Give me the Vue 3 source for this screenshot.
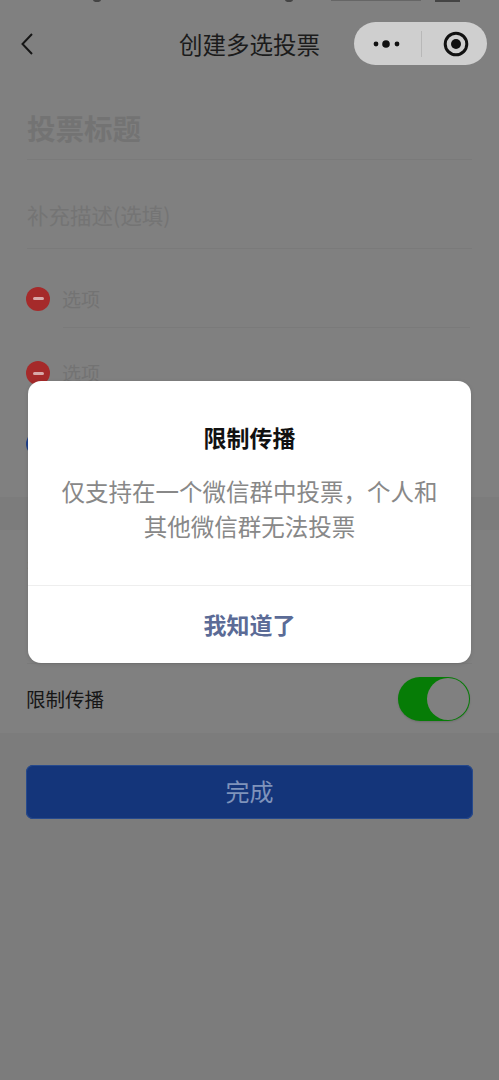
<script setup>
const options = [{ id: 1 }, { id: 2 }]
</script>

<template>
  <div class="page">
    <div class="status">
      <span class="st-dot st-a"></span>
      <span class="st-dot st-b"></span>
      <span class="st-bits"></span>
      <span class="st-batt"></span>
    </div>
    <header class="nav">
      <svg class="back" width="14" height="24" viewBox="0 0 14 24">
        <path d="M12 2 L2.5 12 L12 22" fill="none" stroke="#161616" stroke-width="2" />
      </svg>
      <div class="nav-title">创建多选投票</div>
      <div class="capsule">
        <svg class="dots" width="30" height="10" viewBox="0 0 30 10">
          <circle cx="4" cy="5" r="2.4" fill="#111" />
          <circle cx="14" cy="5" r="3.8" fill="#111" />
          <circle cx="25" cy="5" r="2.4" fill="#111" />
        </svg>
        <span class="cap-sep"></span>
        <svg class="target" width="26" height="26" viewBox="0 0 26 26">
          <circle cx="13" cy="13" r="10.8" fill="none" stroke="#111" stroke-width="3" />
          <circle cx="13" cy="13" r="5" fill="#111" />
        </svg>
      </div>
    </header>

    <section class="form">
      <div class="vote-title">投票标题</div>
      <div class="vote-desc">补充描述(选填)</div>
      <div v-for="o in options" :key="o.id" class="option">
        <span class="minus"><i></i></span>
        <span class="opt-text">选项</span>
      </div>
      <div class="add-row"><span class="plus"></span></div>
    </section>

    <section class="settings">
      <div class="set-row set-top"><span class="set-mark">截止时间</span></div>
      <div class="set-row set-limit">
        <span class="set-label">限制传播</span>
        <span class="switch"><i></i></span>
      </div>
    </section>

    <div class="btn-wrap">
      <div class="done">完成</div>
    </div>

    <div class="modal">
      <div class="m-body">
        <div class="m-title">限制传播</div>
        <div class="m-text">仅支持在一个微信群中投票，个人和<br />其他微信群无法投票</div>
      </div>
      <div class="m-action">我知道了</div>
    </div>
  </div>
</template>

<style scoped>
.page {
  position: relative;
  width: 499px;
  height: 1080px;
  overflow: hidden;
  background: #7c7c7c;
  font-family: "Noto Sans CJK SC", "Noto Sans", sans-serif;
}
.status {
  position: relative;
  height: 4px;
  background: #808080;
}
.st-dot {
  position: absolute;
  top: -3px;
  width: 8px;
  height: 5px;
  border-radius: 50%;
  background: #444;
}
.st-a { left: 93px; }
.st-b { left: 285px; }
.st-bits {
  position: absolute;
  top: 0;
  left: 331px;
  width: 90px;
  height: 1px;
  background: #666;
}
.st-batt {
  position: absolute;
  top: 0;
  left: 435px;
  width: 25px;
  height: 2px;
  background: #444;
}
.nav {
  position: relative;
  height: 68px;
  display: flex;
  align-items: center;
  justify-content: center;
  background: #808080;
}
.back {
  position: absolute;
  left: 20px;
  top: 28px;
}
.nav-title {
  font-size: 23.5px;
  line-height: 30px;
  color: #1b1b1b;
  margin-top: 12px;
}
.capsule {
  position: absolute;
  left: 354px;
  top: 18px;
  width: 133px;
  height: 43px;
  border-radius: 22px;
  background: #cfcfcf;
  display: flex;
  align-items: center;
}
.dots { margin-left: 18px; }
.cap-sep {
  width: 1px;
  height: 26px;
  margin-left: 19px;
  background: #b8b8b8;
}
.target { margin-left: 21px; }
.form {
  background: #808080;
  padding: 0 27px;
  height: 425px;
  box-sizing: border-box;
}
.vote-title {
  height: 88px;
  padding-top: 35px;
  box-sizing: border-box;
  font-size: 28.5px;
  line-height: 42px;
  font-weight: 700;
  color: #737373;
  border-bottom: 1px solid #7a7a7a;
}
.vote-desc {
  height: 89px;
  padding-top: 39px;
  box-sizing: border-box;
  font-size: 21.5px;
  line-height: 32px;
  color: #747474;
  border-bottom: 1px solid #7a7a7a;
}
.option {
  position: relative;
  display: flex;
  align-items: center;
  box-sizing: border-box;
  height: 79px;
  padding-top: 20px;
}
.option::after {
  content: "";
  position: absolute;
  left: 36px;
  right: 2px;
  bottom: 0;
  height: 1px;
  background: #7a7a7a;
}
.option + .option {
  height: 68px;
  padding-top: 22px;
}
.minus {
  width: 24px;
  height: 24px;
  margin-left: -1px;
  border-radius: 50%;
  background: #a52a2a;
  display: flex;
  align-items: center;
  justify-content: center;
  flex: none;
}
.minus i {
  width: 11px;
  height: 3px;
  border-radius: 2px;
  background: #d8a9a9;
}
.opt-text {
  margin-left: 12px;
  font-size: 19px;
  color: #737373;
  flex: 1;
  line-height: 28px;
}
.add-row {
  position: relative;
  height: 101px;
}
.plus {
  position: absolute;
  left: -1px;
  top: 36px;
  width: 24px;
  height: 24px;
  border-radius: 50%;
  background: #1f3f88;
}
.settings {
  margin-top: 33px;
  background: #808080;
  padding: 0 27px;
  height: 203px;
  box-sizing: border-box;
}
.set-row { display: flex; align-items: center; }
.set-top {
  height: 133px;
  border-bottom: 1px solid #7a7a7a;
}
.set-mark {
  font-size: 19px;
  color: #6a6a6a;
  margin-top: -62px;
}
.set-limit {
  height: 70px;
  justify-content: space-between;
}
.set-label {
  font-size: 19.5px;
  line-height: 28px;
  margin-left: -1px;
  color: #161616;
}
.switch {
  position: relative;
  width: 72px;
  height: 44px;
  margin-right: 2px;
  border-radius: 22px;
  background: #067c06;
  box-shadow: 0 1px 2px rgba(0, 0, 0, 0.15);
  flex: none;
}
.switch i {
  position: absolute;
  right: 1px;
  top: 1px;
  width: 42px;
  height: 42px;
  border-radius: 50%;
  background: #808080;
}
.btn-wrap { padding: 32px 26px 0; }
.done {
  height: 54px;
  border-radius: 7px;
  background: #14357a;
  box-shadow: inset 0 0 0 1px #274a8d;
  color: #7f93bb;
  font-size: 24px;
  line-height: 52px;
  text-align: center;
}
.modal {
  position: absolute;
  left: 28px;
  top: 381px;
  width: 443px;
  height: 282px;
  border-radius: 13px;
  background: #fff;
  box-shadow: 0 1px 4px rgba(0, 0, 0, 0.12);
  display: flex;
  flex-direction: column;
}
.m-body {
  height: 205px;
  border-bottom: 1px solid #eeeeee;
  text-align: center;
}
.m-title {
  padding-top: 39px;
  font-size: 23px;
  line-height: 34px;
  font-weight: 700;
  color: #111;
}
.m-text {
  margin-top: 20px;
  font-size: 23.5px;
  line-height: 35px;
  color: #888888;
}
.m-action {
  flex: 1;
  text-align: center;
  font-size: 23px;
  line-height: 77px;
  font-weight: 700;
  color: #5b6b96;
}
</style>
